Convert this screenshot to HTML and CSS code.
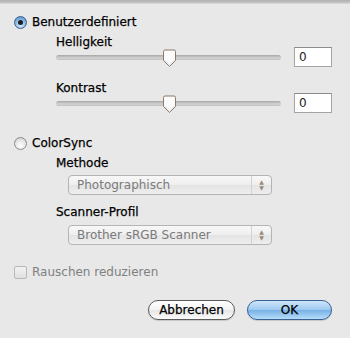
FILE: index.html
```html
<!DOCTYPE html>
<html>
<head>
<meta charset="utf-8">
<link rel="stylesheet" href="styles.css">
</head>
<body>
<div class="topbar"></div>
<div class="dialog">
  <div class="option">
    <span class="radio on"><span class="dot"></span></span>
    <span class="label">Benutzerdefiniert</span>
  </div>
  <div class="group">
    <div class="caption">Helligkeit</div>
    <div class="slider-row">
      <div class="slider"><div class="track"></div><div class="thumb" style="left:106px"><svg width="15" height="19" viewBox="0 0 15 19"><path d="M1.5 2.5 Q1.5 1 3 1 H12 Q13.5 1 13.5 2.5 V11.5 L7.5 17.5 L1.5 11.5 Z" fill="#fbfbfb" stroke="#8a7a6a" stroke-width="1"/><path d="M2.5 11 L7.5 16 L12.5 11" fill="none" stroke="#ddd" stroke-width="1"/></svg></div></div>
      <div class="field">0</div>
    </div>
    <div class="caption second">Kontrast</div>
    <div class="slider-row">
      <div class="slider"><div class="track"></div><div class="thumb" style="left:106px"><svg width="15" height="19" viewBox="0 0 15 19"><path d="M1.5 2.5 Q1.5 1 3 1 H12 Q13.5 1 13.5 2.5 V11.5 L7.5 17.5 L1.5 11.5 Z" fill="#fbfbfb" stroke="#8a7a6a" stroke-width="1"/><path d="M2.5 11 L7.5 16 L12.5 11" fill="none" stroke="#ddd" stroke-width="1"/></svg></div></div>
      <div class="field">0</div>
    </div>
  </div>
  <div class="option cs">
    <span class="radio"></span>
    <span class="label">ColorSync</span>
  </div>
  <div class="group">
    <div class="caption">Methode</div>
    <div class="popup first"><span class="ptext">Photographisch</span><span class="arrows"><span>&#9650;</span><span>&#9660;</span></span></div>
    <div class="caption second2">Scanner-Profil</div>
    <div class="popup"><span class="ptext">Brother sRGB Scanner</span><span class="arrows"><span>&#9650;</span><span>&#9660;</span></span></div>
  </div>
  <div class="option check">
    <span class="box"></span>
    <span class="label dim">Rauschen reduzieren</span>
  </div>
  <div class="buttons">
    <div class="btn cancel">Abbrechen</div>
    <div class="btn default">OK</div>
  </div>
</div>
</body>
</html>
```
FILE: styles.css
```css
html, body {
  margin: 0;
  padding: 0;
}
body {
  width: 350px;
  height: 338px;
  overflow: hidden;
  background: #e8e8e8;
  font-family: "DejaVu Sans", sans-serif;
  font-size: 12px;
  color: #000;
}
.topbar {
  height: 3px;
  background: linear-gradient(#b0b0b0, #c6c6c6);
  border-bottom: 1px solid #d6d6d6;
}
.dialog {
  padding: 11px 0 0 14px;
}
.option {
  display: flex;
  align-items: center;
  height: 15px;
}
.label {
  margin-left: 5px;
  line-height: 15px;
  -webkit-text-stroke: 0.25px #000;
}
.caption {
  line-height: 15px;
  margin-top: 5px;
  -webkit-text-stroke: 0.25px #000;
}
.radio {
  width: 13px;
  height: 13px;
  border-radius: 50%;
  box-sizing: border-box;
  border: 1px solid #8c8c8c;
  background: radial-gradient(circle at 50% 70%, #ffffff 0%, #e6e6e6 55%, #c4c4c4 100%);
  display: flex;
  align-items: center;
  justify-content: center;
}
.radio.on {
  border-color: #3a5d88;
  background: radial-gradient(circle at 50% 75%, #d6ecfb 0%, #8cbce6 50%, #4f86c2 100%);
}
.dot {
  width: 5px;
  height: 5px;
  border-radius: 50%;
  background: #1b1f24;
}
.group {
  margin-left: 42px;
}
.caption.second {
  margin-top: 14px;
}
.slider-row {
  display: flex;
  align-items: flex-start;
  height: 20px;
  margin-top: -3px;
}
.slider {
  position: relative;
  width: 225px;
  height: 20px;
}
.track {
  position: absolute;
  left: 0;
  right: 0;
  top: 8px;
  height: 5px;
  border-radius: 3px;
  background: linear-gradient(#a6a6a6, #d4d4d4 60%, #c0c0c0);
}
.thumb {
  position: absolute;
  top: 2px;
  width: 15px;
  height: 19px;
}
.thumb svg { display: block; }
.field {
  margin-left: 13px;
  width: 38px;
  height: 20px;
  box-sizing: border-box;
  border: 1px solid #a4a4a4;
  border-top-color: #8c8c8c;
  background: #fff;
  padding-left: 4px;
  line-height: 18px;
  font-size: 12px;
  color: #222;
}
.option.cs {
  margin-top: 23px;
}
.popup {
  margin: 5px 0 0 12px;
  width: 204px;
  height: 20px;
  box-sizing: border-box;
  border: 1px solid #b4b4b4;
  border-radius: 4px;
  background: linear-gradient(#f8f8f8, #eeeeee 50%, #e4e4e4 51%, #eeeeee);
  display: flex;
  align-items: center;
  color: #7a7a7a;
}
.popup.first {
  margin-top: 4px;
}
.ptext {
  flex: 1;
  padding-left: 8px;
  line-height: 18px;
}
.arrows {
  width: 19px;
  height: 18px;
  border-left: 1px solid #d2d2d2;
  display: flex;
  flex-direction: column;
  align-items: center;
  justify-content: center;
  font-size: 6px;
  line-height: 6px;
  color: #9a8a7a;
}
.caption.second2 {
  margin-top: 10px;
}
.option.check {
  margin-top: 20px;
}
.box {
  width: 13px;
  height: 13px;
  box-sizing: border-box;
  border: 1px solid #b8b8b8;
  border-radius: 2px;
  background: linear-gradient(#f2f2f2, #e0e0e0);
}
.label.dim {
  color: #808080;
  -webkit-text-stroke: 0;
}
.buttons {
  display: flex;
  justify-content: flex-end;
  gap: 12px;
  margin: 20px 18px 0 0;
}
.btn {
  height: 20px;
  box-sizing: border-box;
  border: 1px solid #5a5a5a;
  border-radius: 10px;
  background: linear-gradient(#ffffff, #f2f2f2 50%, #e6e6e6 51%, #fafafa);
  text-align: center;
  line-height: 18px;
  font-size: 12px;
  -webkit-text-stroke: 0.25px #000;
  box-shadow: 0 1px 1px rgba(0,0,0,0.15);
}
.btn.cancel {
  width: 87px;
}
.btn.default {
  width: 85px;
  border-color: #3a5f92;
  background: linear-gradient(#cfe6fb, #9cc8ef 50%, #77afe6 51%, #b6def9);
}
```
